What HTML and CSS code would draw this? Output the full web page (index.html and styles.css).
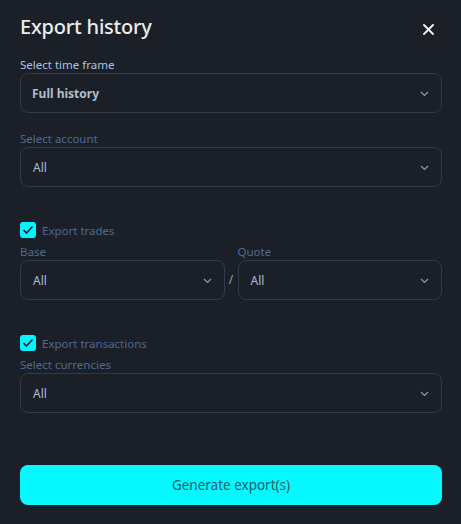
FILE: index.html
```html
<!DOCTYPE html>
<html lang="en">
<head>
    <meta charset="UTF-8">
    <meta name="viewport" content="width=device-width, initial-scale=1.0">
    <title>Export history</title>
    <link rel="stylesheet" href="styles.css">
</head>
<body>
    <div class="modal">
        <div class="modal-header">
            <h2>Export history</h2>
            <button class="close-btn" aria-label="Close">
                <svg width="11" height="11" viewBox="0 0 11 11"><path d="M1 1L10 10M10 1L1 10" stroke="#f2f2f2" stroke-width="1.9" stroke-linecap="round"/></svg>
            </button>
        </div>

        <div class="field">
            <label class="label label-active">Select time frame</label>
            <div class="select select-strong">
                <span>Full history</span>
                <svg class="chevron" width="9" height="6" viewBox="0 0 9 6"><path d="M1 1L4.5 4.5L8 1" fill="none" stroke="#8d9bb0" stroke-width="1.2"/></svg>
            </div>
        </div>

        <div class="field">
            <label class="label">Select account</label>
            <div class="select">
                <span>All</span>
                <svg class="chevron" width="9" height="6" viewBox="0 0 9 6"><path d="M1 1L4.5 4.5L8 1" fill="none" stroke="#8d9bb0" stroke-width="1.2"/></svg>
            </div>
        </div>

        <div class="section">
            <div class="check-row">
                <span class="checkbox">
                    <svg width="12" height="10" viewBox="0 0 12 10"><path d="M1.5 5L4.5 8L10.5 1.5" fill="none" stroke="#1b1f27" stroke-width="1.6"/></svg>
                </span>
                <span class="check-text">Export trades</span>
            </div>
            <div class="pair">
                <div class="field">
                    <label class="label">Base</label>
                    <div class="select">
                        <span>All</span>
                        <svg class="chevron" width="9" height="6" viewBox="0 0 9 6"><path d="M1 1L4.5 4.5L8 1" fill="none" stroke="#8d9bb0" stroke-width="1.2"/></svg>
                    </div>
                </div>
                <span class="slash">/</span>
                <div class="field">
                    <label class="label">Quote</label>
                    <div class="select">
                        <span>All</span>
                        <svg class="chevron" width="9" height="6" viewBox="0 0 9 6"><path d="M1 1L4.5 4.5L8 1" fill="none" stroke="#8d9bb0" stroke-width="1.2"/></svg>
                    </div>
                </div>
            </div>
        </div>

        <div class="section">
            <div class="check-row">
                <span class="checkbox">
                    <svg width="12" height="10" viewBox="0 0 12 10"><path d="M1.5 5L4.5 8L10.5 1.5" fill="none" stroke="#1b1f27" stroke-width="1.6"/></svg>
                </span>
                <span class="check-text">Export transactions</span>
            </div>
            <div class="field">
                <label class="label">Select currencies</label>
                <div class="select">
                    <span>All</span>
                    <svg class="chevron" width="9" height="6" viewBox="0 0 9 6"><path d="M1 1L4.5 4.5L8 1" fill="none" stroke="#8d9bb0" stroke-width="1.2"/></svg>
                </div>
            </div>
        </div>

        <button class="submit-btn">Generate export(s)</button>
    </div>
</body>
</html>
```

FILE: styles.css
```css
/* Page */
body {
    margin: 0;
    background-color: #1b1f27;
    font-family: "Noto Sans", Arial, sans-serif;
}

.modal {
    width: 422px;
    padding: 0 19px 0 20px;
    display: flex;
    flex-direction: column;
}

/* Header */
.modal-header {
    display: flex;
    justify-content: space-between;
    align-items: center;
    height: 52px;
    margin-bottom: 5px;
}

.modal-header h2 {
    margin: 0;
    font-size: 20px;
    font-weight: 500;
    color: #ececec;
    letter-spacing: -0.2px;
}

.close-btn {
    background: none;
    border: none;
    padding: 0;
    margin-right: 8px;
    margin-top: 6px;
    cursor: pointer;
    display: flex;
}

/* Fields */
.field {
    display: flex;
    flex-direction: column;
    flex: 1;
}

.field + .field {
    margin-top: 18px;
}

.label {
    font-size: 11.5px;
    color: #4f6a8f;
    height: 16px;
    line-height: 16px;
}

.label-active {
    color: #a9c3e6;
}

.select {
    height: 38px;
    border: 1px solid #2f3a4c;
    border-radius: 8px;
    display: flex;
    align-items: center;
    justify-content: space-between;
    padding: 0 12px 0 12px;
    font-size: 12px;
    color: #a7bedd;
}

.select-strong {
    font-weight: 700;
    color: #b4bccb;
    padding-left: 11px;
}

.chevron {
    margin-top: 1px;
}

/* Checkbox sections */
.section {
    margin-top: 35px;
}

.check-row {
    display: flex;
    align-items: center;
    gap: 6px;
    height: 16px;
    margin-bottom: 6px;
}

.checkbox {
    width: 16px;
    height: 16px;
    border-radius: 3px;
    background-color: #00f6ff;
    display: flex;
    align-items: center;
    justify-content: center;
}

.check-text {
    font-size: 11.5px;
    color: #4f6a8f;
}

.pair {
    display: flex;
    align-items: flex-end;
}

.pair .field + .field {
    margin-top: 0;
}

.slash {
    width: 13px;
    text-align: center;
    font-size: 12px;
    color: #8da4c4;
    height: 40px;
    line-height: 40px;
}

/* Submit */
.submit-btn {
    margin-top: 52px;
    height: 40px;
    border: none;
    border-radius: 8px;
    background-color: #05f8ff;
    color: #1b6468;
    font-family: "Noto Sans", Arial, sans-serif;
    font-size: 13.5px;
    cursor: pointer;
}
```
